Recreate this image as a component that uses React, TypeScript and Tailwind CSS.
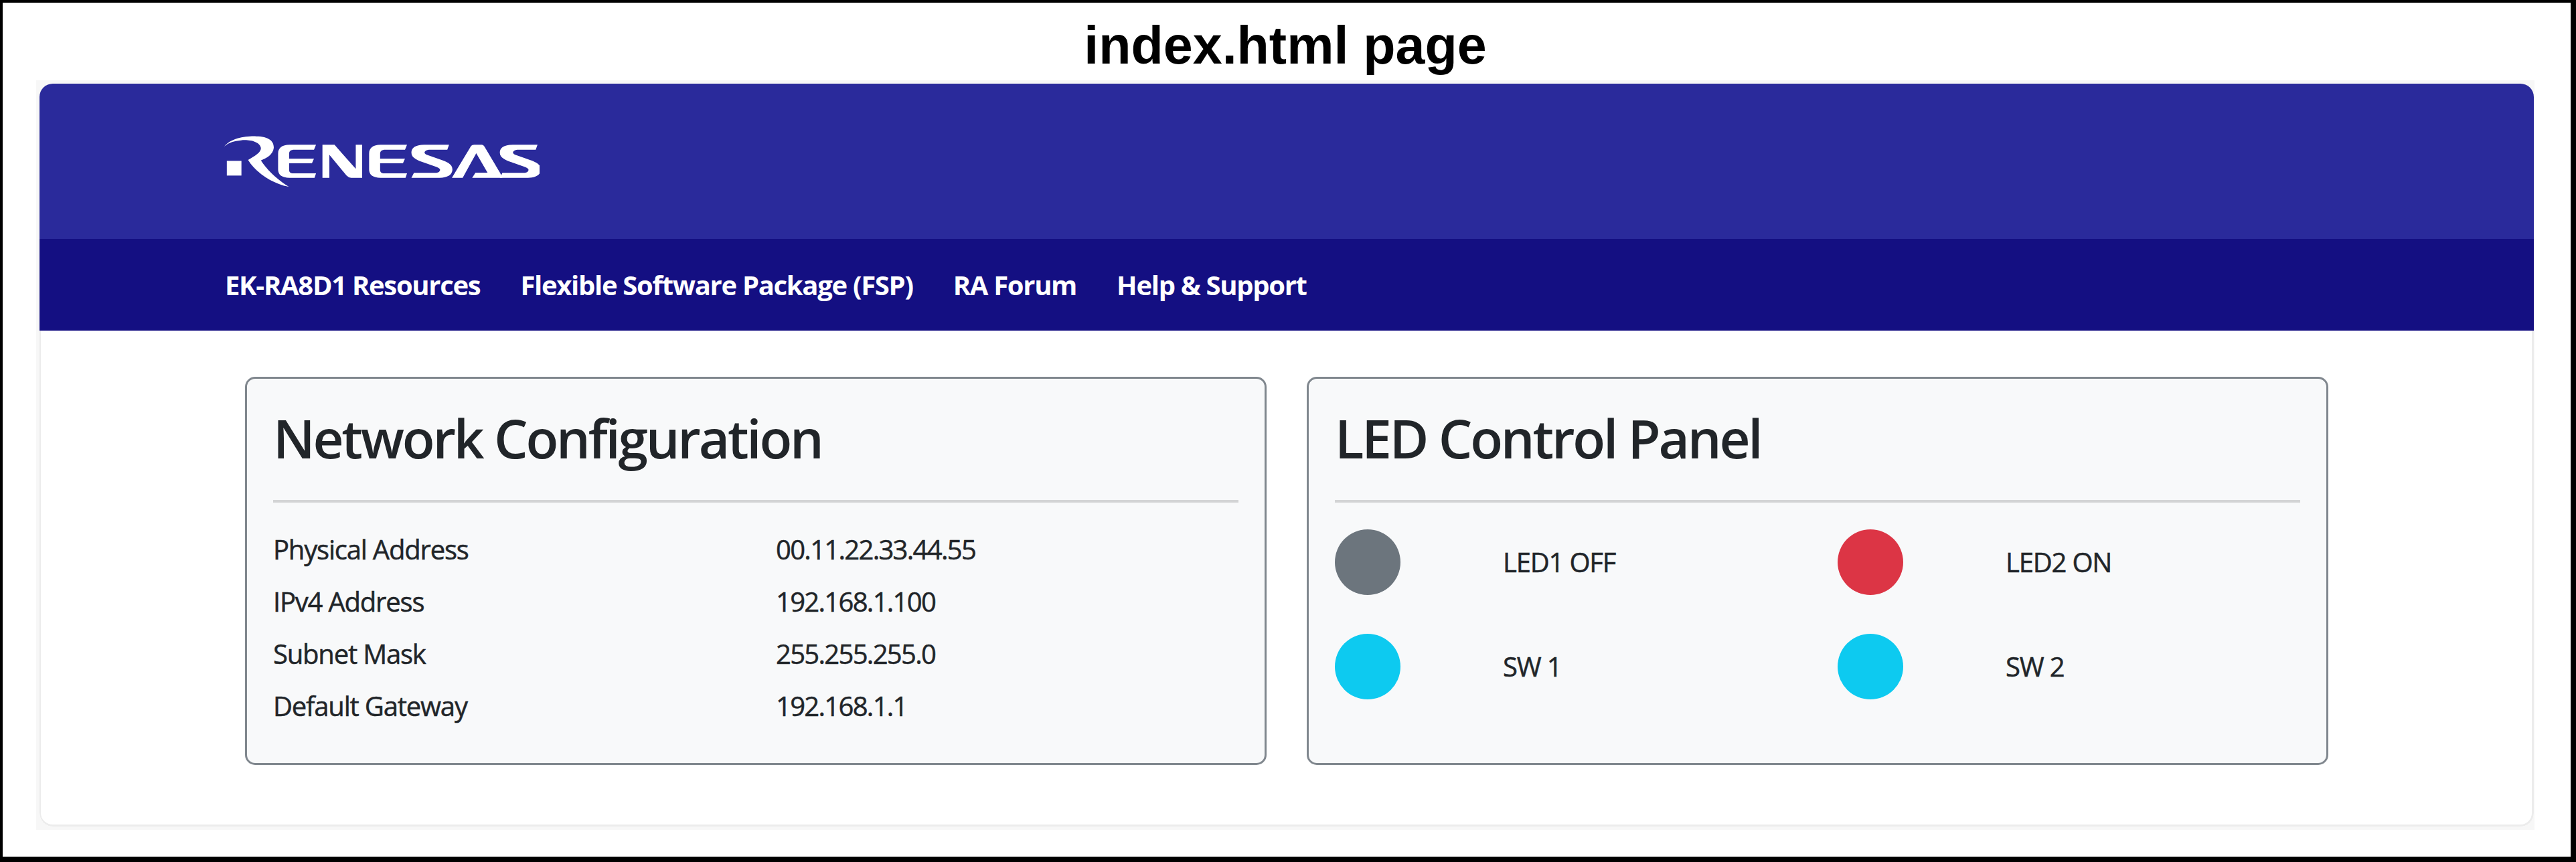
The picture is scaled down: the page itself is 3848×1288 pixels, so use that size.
const sans = "font-['Open_Sans',sans-serif]";

function Logo() {
  return (
    <svg className="block w-[471px] h-[77px] blur-[0.7px]" viewBox="145 70 1230 231" preserveAspectRatio="none" fill="#fff">
      <rect x="155" y="182" width="57" height="66" />
      <path d="M145 118C170 80 230 70 270 72C320 72 340 95 338 125C335 155 310 170 288 180C310 220 350 265 397 298C330 285 265 230 238 178C265 160 288 145 288 125C285 95 240 85 210 90C185 93 160 100 145 118Z" />
      <path d="M503 110L400 110C370 110 355 125 355 150L355 220C355 245 370 258 400 258L497 258L503 238L415 238C403 238 398 232 398 222L398 193L487 193L495 172L398 172L398 150C398 138 405 132 418 132L495 132Z" />
      <path d="M528 110L575 110L658 218L658 110L683 110L683 258L640 258Q630 258 622 248L555 155L555 258L528 258Z" />
      <path transform="translate(355 0)" d="M503 110L400 110C370 110 355 125 355 150L355 220C355 245 370 258 400 258L497 258L503 238L415 238C403 238 398 232 398 222L398 193L487 193L495 172L398 172L398 150C398 138 405 132 418 132L495 132Z" />
      <path d="M1022 110L925 110C890 110 875 125 875 145C875 170 900 180 925 190L975 210C985 215 990 220 985 228C983 234 975 236 965 236L885 236L875 258L985 258C1015 258 1035 245 1035 220C1035 195 1010 185 985 175L935 155C925 150 925 145 928 140C932 133 940 132 950 132L1015 132Z" />
      <path d="M1033 258L1108 115Q1112 110 1120 110L1150 110Q1156 110 1160 118L1222 238L1230 258L1112 258L1125 235L1172 235L1128 148L1075 258Z" />
      <path transform="translate(345 0)" d="M1022 110L925 110C890 110 875 125 875 145C875 170 900 180 925 190L975 210C985 215 990 220 985 228C983 234 975 236 965 236L885 236L875 258L985 258C1015 258 1035 245 1035 220C1035 195 1010 185 985 175L935 155C925 150 925 145 928 140C932 133 940 132 950 132L1015 132Z" />
    </svg>
  );
}

const network = [
  ['Physical Address', '00.11.22.33.44.55'],
  ['IPv4 Address', '192.168.1.100'],
  ['Subnet Mask', '255.255.255.0'],
  ['Default Gateway', '192.168.1.1'],
];

const leds = [
  { color: 'bg-[#6c757d]', label: 'LED1 OFF' },
  { color: 'bg-[#dc3545]', label: 'LED2 ON' },
  { color: 'bg-[#0dcaf0]', label: 'SW 1' },
  { color: 'bg-[#0dcaf0]', label: 'SW 2' },
];

function Panel({ title, children }: { title: string; children: React.ReactNode }) {
  return (
    <div className="w-[1526px] h-[580px] bg-[#f8f9fa] border-[3px] border-[#80878e] rounded-[15px] px-[39px]">
      <h2 className="h-[181px] pt-[40px] text-[80px] leading-[96px] font-semibold tracking-[-3.2px] text-[#212529]">{title}</h2>
      <div className="h-[4px] bg-[#d3d4d5]" />
      {children}
    </div>
  );
}

export default function App() {
  return (
    <div className="w-[3848px] h-[1288px] bg-white border-t-[4px] border-l-[4px] border-r-[8px] border-b-[8px] border-black flex flex-col overflow-hidden">
      <h1 className="h-[116px] pt-[34px] pr-[4px] text-center text-[79px] leading-[60px] font-bold text-black font-['Liberation_Sans',sans-serif]">
        index.html page
      </h1>
      <div className="ml-[50px] w-[3732px] h-[1120px] bg-[#f7f7f7] pt-[5px] pb-[5px] pl-[5px] pr-[1px]">
        <div className={`h-[1110px] bg-white rounded-[20px] overflow-hidden ${sans}`}>
          <div className="h-[232px] bg-[#2a2a9b] pl-[276px] pt-[78px]">
            <Logo />
          </div>
          <div className="h-[137px] bg-[#140f82] pl-[277px] flex items-center gap-[60px] text-[40px] font-bold tracking-[-1.3px] text-white">
            <span>EK-RA8D1 Resources</span>
            <span>Flexible Software Package (FSP)</span>
            <span>RA Forum</span>
            <span>Help &amp; Support</span>
          </div>
          <div className="h-[741px] flex gap-[60px] pl-[305px] pt-[69px] border-l-2 border-r-[3px] border-b-[3px] border-[#ececec] rounded-b-[20px]">
            <Panel title="Network Configuration">
              <div className="pt-[40px] flex flex-col gap-[18px] text-[40px] leading-[60px] tracking-[-1.2px] text-[#212529] [-webkit-text-stroke:0.5px_#212529]">
                {network.map(([label, value]) => (
                  <div key={label} className="flex">
                    <div className="w-[751px]">{label}</div>
                    <div className="tracking-[-1.7px]">{value}</div>
                  </div>
                ))}
              </div>
            </Panel>
            <Panel title="LED Control Panel">
              <div className="pt-[40px] grid grid-cols-2 w-[1502px] gap-y-[58px] text-[40px] leading-[60px] tracking-[-1.2px] text-[#212529] [-webkit-text-stroke:0.5px_#212529]">
                {leds.map((led) => (
                  <div key={led.label} className="flex items-center">
                    <div className={`w-[98px] h-[98px] rounded-full ${led.color}`} />
                    <div className="ml-[153px]">{led.label}</div>
                  </div>
                ))}
              </div>
            </Panel>
          </div>
        </div>
      </div>
    </div>
  );
}
